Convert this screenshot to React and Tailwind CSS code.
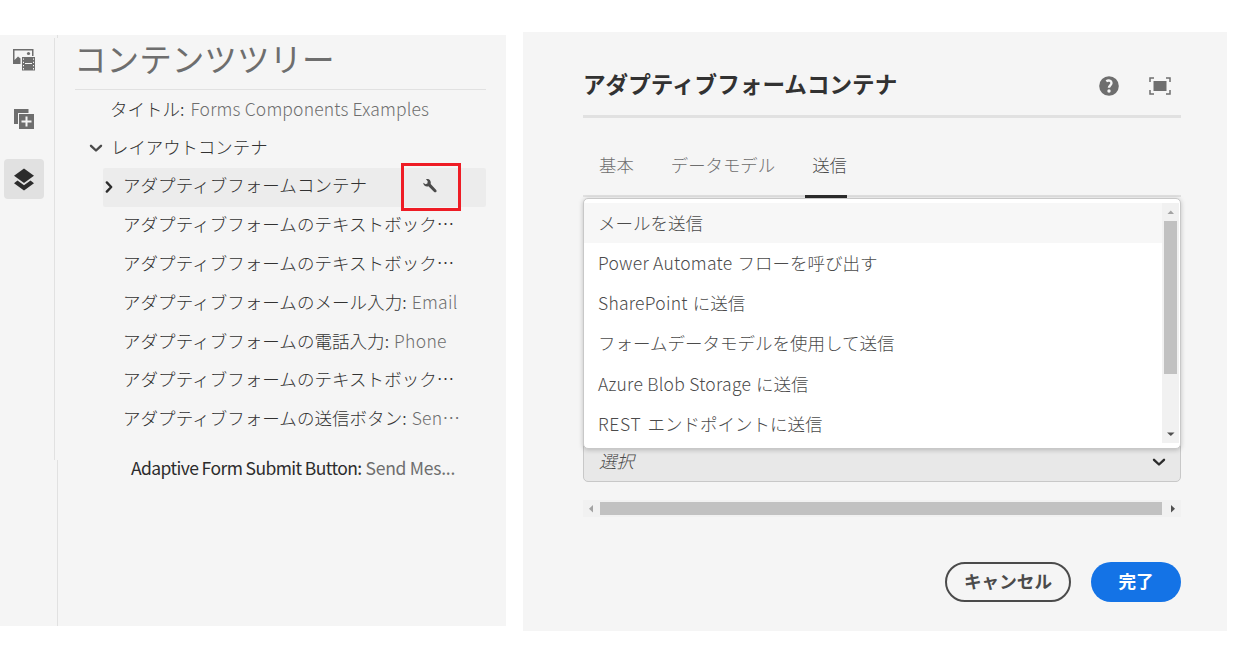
import React from "react";

const treeItems = [
  { label: "アダプティブフォームのテキストボック…" },
  { label: "アダプティブフォームのテキストボック…" },
  { label: "アダプティブフォームのメール入力:", value: "Email" },
  { label: "アダプティブフォームの電話入力:", value: "Phone" },
  { label: "アダプティブフォームのテキストボック…" },
  { label: "アダプティブフォームの送信ボタン:", value: "Sen…" },
];

const submitOptions = [
  { name: "", label: "メールを送信" },
  { name: "Power Automate", label: "フローを呼び出す" },
  { name: "SharePoint", label: "に送信" },
  { name: "", label: "フォームデータモデルを使用して送信" },
  { name: "Azure Blob Storage", label: "に送信" },
  { name: "REST", label: "エンドポイントに送信" },
];

function AssetsIcon() {
  return (
    <svg width="23" height="22" viewBox="0 0 23 22" fill="#6e6e6e">
      <path d="M0 0h20.500v7h-1.500V1.500H1.500V11L5 7.500l2.500 2V15H0z" />
      <circle cx="15.500" cy="4.500" r="1.600" />
      <path fillRule="evenodd" d="M9 8h13v13.500H9zM12 14v1h7v-1zM10 9.500v1.300h1V9.500zm0 3.200V14h1v-1.300zm0 3.200v1.300h1v-1.300zm0 3.200v1.300h1v-1.300zm10-9.600v1.300h1V9.500zm0 3.200V14h1v-1.300zm0 3.200v1.300h1v-1.300zm0 3.200v1.300h1v-1.300z" />
    </svg>
  );
}

function ComponentsIcon() {
  return (
    <svg width="20" height="20" viewBox="0 0 20 20">
      <path fill="#6e6e6e" d="M0 0h14.500v4H4v11H0z" />
      <path fill="#6e6e6e" d="M5 5h15v15H5z" />
      <path fill="#f5f5f5" d="M11.500 7.500h2v4H17.500v2h-4V17.500h-2v-4h-4v-2h4z" />
    </svg>
  );
}

function LayersIcon() {
  return (
    <svg width="20" height="23" viewBox="0 0 20 23" fill="#2c2c2c">
      <path d="M10 .5 20 7.800 10 15 0 7.800z" />
      <path d="M0 15.200 3.500 12.600 10 17.300l6.500-4.700 3.500 2.600L10 22.500z" />
    </svg>
  );
}

function Chevron({ className, direction = "down" }) {
  return (
    <svg className={className} width="14" height="14" viewBox="0 0 14 14" fill="none" stroke="currentColor" strokeWidth="2.400" strokeLinecap="round" strokeLinejoin="round">
      <path d={direction === "down" ? "M2 4.800 7 9.500l5-4.700" : "M4.800 2.400 9.200 7l-4.400 4.600"} />
    </svg>
  );
}

function WrenchIcon() {
  return (
    <svg width="14" height="14" viewBox="0 0 14 14" fill="#4b4b4b">
      <path d="M3 .3C4.700-.3 6.600.3 7.400 2c.5 1 .4 2.200.3 3l5.500 5.900c.5.600.5 1.400 0 2-.6.500-1.400.5-2 0L5.400 7.300C3.500 8 1.500 7.300.7 5.600.4 5 .3 4.400.4 3.700l2 1.500 2-.7.300-2.200z" />
    </svg>
  );
}

function TreePanel() {
  return (
    <section className="flex h-[591px] w-[506px] flex-col bg-[#f5f5f5]">
      <div className="h-[3px] w-[58px] border-r border-[#e1e1e1]" />
      <div className="flex h-[422px]">
        <nav className="flex w-[55px] shrink-0 flex-col border-r border-[#e1e1e1]">
          <div className="flex h-[43px] items-center pl-[13px]"><AssetsIcon /></div>
          <div className="mt-[18px] flex h-[40px] items-center justify-center pr-[6px]"><ComponentsIcon /></div>
          <div className="mt-[20px] ml-[4px] flex h-[40px] w-[40px] items-center justify-center rounded-[4px] bg-[#e1e1e1]"><LayersIcon /></div>
        </nav>
        <div className="ml-[20px] w-[411px] whitespace-nowrap text-[17.5px] font-light text-[#323232]">
          <h1 className="flex h-[52px] items-center border-b border-[#e1e1e1] pb-[11px] text-[32.600px] font-normal text-[#6e6e6e]">
            <span className="-ml-px">コンテンツツリー</span>
          </h1>
          <div className="flex h-[39px] items-center pl-[35px]">
            <span>タイトル:</span>
            <span className="ml-[6px] tracking-[0.160px] text-[#6e6e6e]">Forms Components Examples</span>
          </div>
          <div className="flex h-[39px] items-center pl-[14px] pb-[3px]">
            <Chevron className="mt-[1px] text-[#4b4b4b]" />
            <span className="ml-[8px] text-[17.400px]">レイアウトコンテナ</span>
          </div>
          <div className="ml-[28px] flex h-[39px] items-center rounded-[2px] bg-[#ececec]">
            <Chevron direction="right" className="-ml-px mb-[2px] text-[#2c2c2c]" />
            <span className="ml-[7px] w-[278px] pb-[4px] tracking-[0.050px]">アダプティブフォームコンテナ</span>
            <button className="-mt-[7px] -mb-[5px] flex h-[48px] w-[60px] items-center justify-center border-3 border-[#ee1c25] pr-[2px] pb-[2px]"><WrenchIcon /></button>
          </div>
          {treeItems.map((item, i) => (
            <div key={i} className="flex h-[38.800px] items-center pl-[48px] pb-[4px]">
              <span className="tracking-[0.050px]">{item.label}</span>
              {item.value && <span className="ml-[5px] tracking-[0.3px] text-[#6e6e6e]">{item.value}</span>}
            </div>
          ))}
        </div>
      </div>
      <div className="flex grow">
        <div className="w-[58px] border-r border-[#e1e1e1]" />
        <div className="ml-[73px] flex h-[16px] items-center whitespace-nowrap text-[17.500px] tracking-[-0.490px]">
          <span className="tracking-[-0.590px] text-[#2c2c2c]">Adaptive Form Submit Button:</span>
          <span className="ml-[4px] tracking-[-0.250px] text-[#6e6e6e]">Send Mes...</span>
        </div>
      </div>
    </section>
  );
}

function HelpIcon() {
  return (
    <svg width="20" height="20" viewBox="0 0 20 20" fill="none">
      <circle cx="10" cy="10" r="9.800" fill="#6e6e6e" />
      <path d="M7.300 5.200C9.500 3.700 12.500 4.500 12.500 7c0 2.200-2.600 2.400-2.600 4.800" stroke="#f5f5f5" strokeWidth="2.400" />
      <circle cx="10" cy="15" r="1.700" fill="#f5f5f5" />
    </svg>
  );
}

function FullscreenIcon() {
  return (
    <svg width="22" height="18" viewBox="0 0 22 18">
      <path fill="none" stroke="#6e6e6e" strokeWidth="1.500" d="M1 5V1h4M17 1h4v4M21 13v4h-4M5 17H1v-4" />
      <path fill="#6e6e6e" d="M4.500 4h13v10h-13z" />
    </svg>
  );
}

function OptionsMenu() {
  return (
    <div className="absolute top-px left-0 flex h-[251px] w-[598px] rounded-[5px] border border-[#c8c8c8] bg-white pt-[4px] pb-[5px] shadow-[0_1px_5px_rgba(0,0,0,0.22)]">
      <ul className="w-[578px] overflow-hidden whitespace-nowrap text-[17.5px] font-light text-[#4b4b4b]">
        {submitOptions.map((o, i) => (
          <li key={i} className={i === 0 ? "flex h-[40px] items-center bg-[#f7f7f7] pl-[14px]" : "flex h-[40.200px] items-center pl-[14px]"}>
            {o.name && <span className={o.name === "REST" ? "mr-[6px] tracking-[0.700px]" : "mr-[5px] tracking-[0.250px]"}>{o.name}</span>}
            <span>{o.label}</span>
          </li>
        ))}
      </ul>
      <div className="flex h-[240px] w-[17px] flex-col items-center bg-[#f1f1f1]">
        <svg width="17" height="17" viewBox="0 0 17 17"><path fill="#a3a3a3" d="M5.500 11h6.500L8.800 7.500z" /></svg>
        <div className="mt-px h-[153px] w-[13px] bg-[#c1c1c1]" />
        <svg className="mt-auto" width="17" height="17" viewBox="0 0 17 17"><path fill="#505050" d="M5 6.500h7.500L8.800 10z" /></svg>
      </div>
    </div>
  );
}

function DialogPanel() {
  return (
    <section className="-mt-[3px] ml-[17px] h-[599px] w-[704px] bg-[#f5f5f5] pl-[60px] pr-[46px]">
      <header className="flex h-[86px] items-center border-b-3 border-[#e1e1e1] pt-[25px]">
        <h2 className="mt-[-5px] whitespace-nowrap text-[22.600px] font-bold text-[#323232]">アダプティブフォームコンテナ</h2>
        <div className="ml-auto mr-[10px] flex items-center gap-[30px]">
          <HelpIcon />
          <FullscreenIcon />
        </div>
      </header>
      <div className="flex h-[79px] items-end border-b-2 border-[#e1e1e1] text-[17.400px] font-light text-[#6e6e6e]">
        <span className="ml-[16px] pb-[17px]">基本</span>
        <span className="ml-[37px] pb-[17px]">データモデル</span>
        <span className="-mb-[3px] ml-[30px] border-b-3 border-[#2c2c2c] pb-[17px] pl-[7px] text-[#4b4b4b]">送信</span>
      </div>
      <div className="relative h-[285px] pt-[242px]">
        <div className="flex h-[43px] w-[598px] items-center rounded-[5px] border border-[#c8c8c8] bg-[#e8e8e8] pt-px pl-[15px] pr-[14px]">
          <span className="text-[17.500px] font-light italic text-[#4b4b4b]">選択</span>
          <Chevron className="mt-[2px] ml-auto text-[#2c2c2c]" />
        </div>
        <OptionsMenu />
      </div>
      <div className="mt-[18px] flex h-[17px] w-[598px] items-center bg-[#f1f1f1]">
        <svg width="17" height="17" viewBox="0 0 17 17"><path fill="#a3a3a3" d="M10 5v7.500L6 8.800z" /></svg>
        <div className="h-[13px] w-[562px] bg-[#c1c1c1]" />
        <svg className="ml-px" width="17" height="17" viewBox="0 0 17 17"><path fill="#505050" d="M8 5v7.500l4-3.700z" /></svg>
      </div>
      <div className="mt-[45px] flex w-[598px] justify-end gap-[20px] text-[17.600px] font-bold">
        <button className="flex h-[40px] w-[126px] items-center justify-center rounded-full border-2 border-[#4b4b4b] pb-[2px] text-[#4b4b4b]">キャンセル</button>
        <button className="flex h-[40px] w-[90px] items-center justify-center rounded-full bg-[#1473e6] pb-[2px] text-white">完了</button>
      </div>
    </section>
  );
}

export default function App() {
  return (
    <main lang="ja" className="flex h-[653px] w-[1240px] items-start overflow-hidden bg-white pt-[35px] font-['Noto_Sans_CJK_JP',sans-serif]">
      <TreePanel />
      <DialogPanel />
    </main>
  );
}
